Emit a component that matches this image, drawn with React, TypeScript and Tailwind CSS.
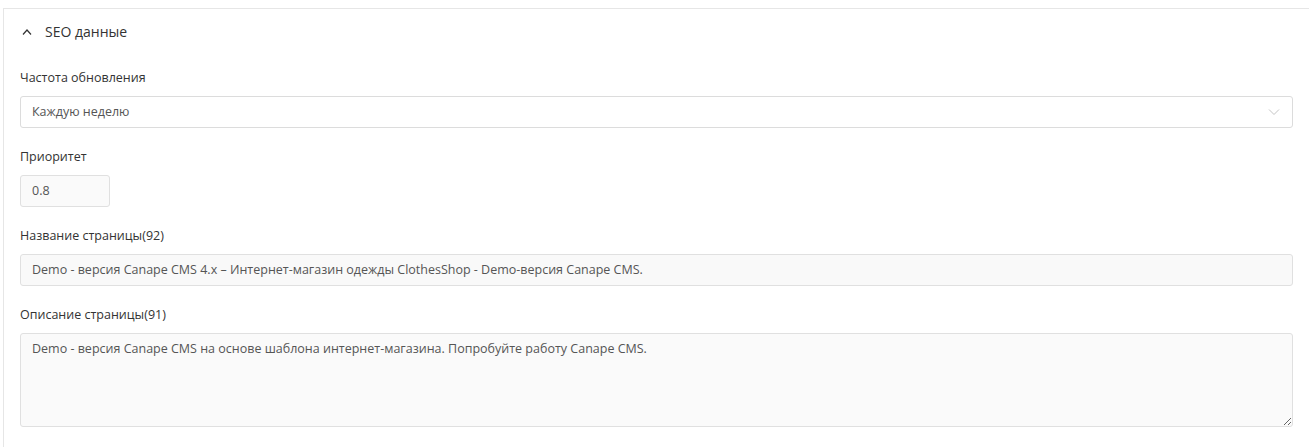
import React from 'react';

const font = { fontFamily: '"Open Sans", "Liberation Sans", sans-serif' };

const Label: React.FC<{ children: React.ReactNode }> = ({ children }) => (
  <div className="text-[12.5px] leading-[18px] text-[#333] pt-px mb-[9px]">{children}</div>
);

export default function App() {
  return (
    <div className="bg-white min-h-[447px] overflow-hidden pl-[3px] pt-2" style={font}>
      <div className="w-[1307px] border border-[#e6e6e6] bg-white px-4 pb-6">
        {/* header */}
        <div className="flex items-center gap-[13px] pt-[13px] pl-[2px]">
          <svg width="10" height="6" viewBox="0 0 10 6" fill="none">
            <path d="M1 5.5 L5 1 L9 5.5" stroke="#333" strokeWidth="1.2" />
          </svg>
          <span className="text-[14px] leading-5 text-[#333]">SEO данные</span>
        </div>

        <div className="mt-[26px]">
          <Label>Частота обновления</Label>
          <div className="flex items-center justify-between h-8 rounded-[3px] border border-[#dcdcdc] bg-white pl-[11px] pr-[12px]">
            <span className="text-[12.5px] text-[#555]">Каждую неделю</span>
            <svg width="12" height="8" viewBox="0 0 12 8" fill="none">
              <path d="M1 1.5 L6 6.5 L11 1.5" stroke="#c4c4c4" strokeWidth="1" />
            </svg>
          </div>
        </div>

        <div className="mt-[19px]">
          <Label>Приоритет</Label>
          <div className="flex items-center h-8 w-[90px] rounded-[3px] border border-[#e0e0e0] bg-[#fafafa] pl-[11px]">
            <span className="text-[12.5px] text-[#555]">0.8</span>
          </div>
        </div>

        <div className="mt-[19px]">
          <Label>Название страницы(92)</Label>
          <div className="flex items-center h-8 rounded-[3px] border border-[#e0e0e0] bg-[#f9f9f9] pl-[11px]">
            <span className="text-[12.5px] text-[#555] whitespace-nowrap">
              Demo - версия Canape CMS 4.x – Интернет-магазин одежды ClothesShop - Demo-версия Canape CMS.
            </span>
          </div>
        </div>

        <div className="mt-[19px]">
          <Label>Описание страницы(91)</Label>
          <textarea
            readOnly
            defaultValue="Demo - версия Canape CMS на основе шаблона интернет-магазина. Попробуйте работу Canape CMS."
            className="block w-full h-[94px] rounded-[3px] border border-[#e0e0e0] bg-[#fafafa] px-[11px] py-[6px] text-[12.5px] leading-[18px] text-[#555] outline-none"
            style={font}
          />
        </div>
      </div>
    </div>
  );
}
